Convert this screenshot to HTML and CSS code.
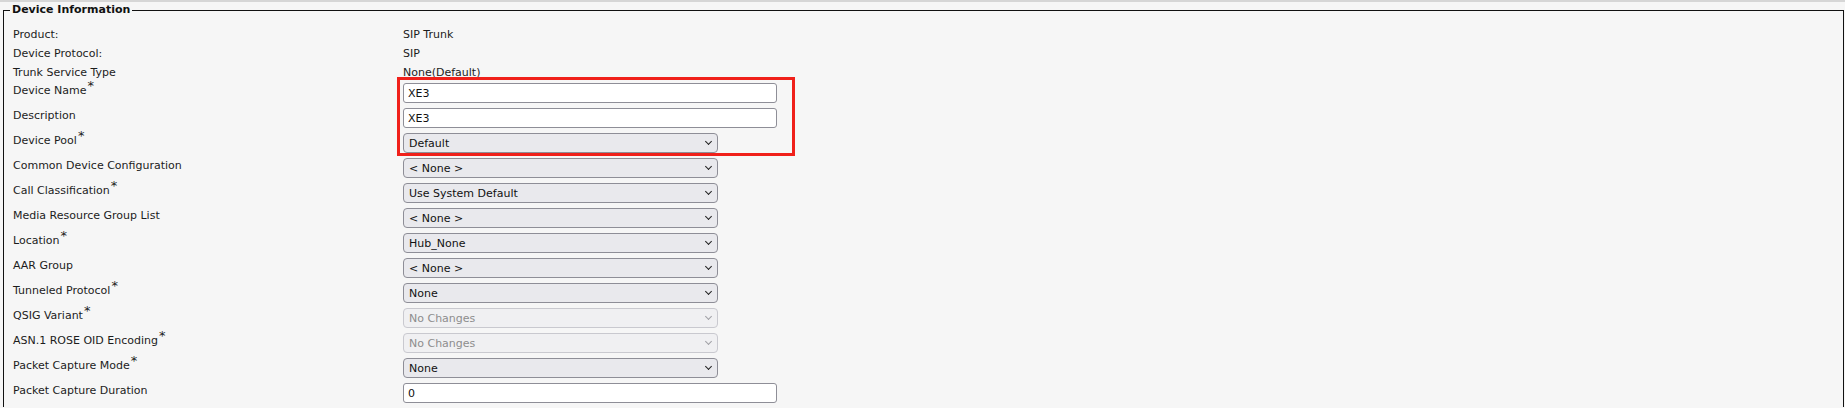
FILE: index.html
```html
<!DOCTYPE html>
<html>
<head>
<meta charset="utf-8">
<title>Device Information</title>
<link rel="stylesheet" href="styles.css">
</head>
<body>
<div class="topline"></div>
<fieldset class="box">
  <legend class="box-title">Device Information</legend>
  <div class="form">
    <div class="lbl txt">Product:</div><div class="val txt">SIP Trunk</div>
    <div class="lbl txt">Device Protocol:</div><div class="val txt">SIP</div>
    <div class="lbl txt">Trunk Service Type</div><div class="val txt">None(Default)</div>

    <div class="lbl ctl">Device Name<span class="req">*</span></div>
    <div class="val ctl anchor"><input class="field" type="text" value="XE3"><div class="highlight"></div></div>
    <div class="lbl ctl">Description</div>
    <div class="val ctl"><input class="field" type="text" value="XE3"></div>
    <div class="lbl ctl">Device Pool<span class="req">*</span></div>
    <div class="val ctl"><span class="sel"><select><option>Default</option></select></span></div>

    <div class="lbl ctl">Common Device Configuration</div>
    <div class="val ctl"><span class="sel"><select><option>&lt; None &gt;</option></select></span></div>
    <div class="lbl ctl">Call Classification<span class="req">*</span></div>
    <div class="val ctl"><span class="sel"><select><option>Use System Default</option></select></span></div>
    <div class="lbl ctl">Media Resource Group List</div>
    <div class="val ctl"><span class="sel"><select><option>&lt; None &gt;</option></select></span></div>
    <div class="lbl ctl">Location<span class="req">*</span></div>
    <div class="val ctl"><span class="sel"><select><option>Hub_None</option></select></span></div>
    <div class="lbl ctl">AAR Group</div>
    <div class="val ctl"><span class="sel"><select><option>&lt; None &gt;</option></select></span></div>
    <div class="lbl ctl">Tunneled Protocol<span class="req">*</span></div>
    <div class="val ctl"><span class="sel"><select><option>None</option></select></span></div>
    <div class="lbl ctl">QSIG Variant<span class="req">*</span></div>
    <div class="val ctl"><span class="sel disabled"><select disabled><option>No Changes</option></select></span></div>
    <div class="lbl ctl">ASN.1 ROSE OID Encoding<span class="req">*</span></div>
    <div class="val ctl"><span class="sel disabled"><select disabled><option>No Changes</option></select></span></div>
    <div class="lbl ctl">Packet Capture Mode<span class="req">*</span></div>
    <div class="val ctl"><span class="sel"><select><option>None</option></select></span></div>
    <div class="lbl ctl">Packet Capture Duration</div>
    <div class="val ctl"><input class="field" type="text" value="0"></div>
  </div>
</fieldset>
</body>
</html>
```

FILE: styles.css
```css
html, body {
  margin: 0;
  padding: 0;
  background: #f6f6f6;
  overflow: hidden;
}
body {
  font-family: "DejaVu Sans", Verdana, sans-serif;
  font-size: 11px;
  color: #1c1c1c;
}
.topline {
  height: 2px;
  background: #d6d6d6;
}
.box {
  margin: 0 1px 0 3px;
  padding: 7px 9px 0 9px;
  border: 1px solid #111;
  border-bottom: none;
  min-width: 0;
}
.box-title {
  margin-left: -3px;
  padding: 0 2px;
  font-weight: bold;
  font-size: 11px;
  line-height: 16px;
  color: #111;
}
.form {
  display: grid;
  grid-template-columns: 390px 1fr;
}
.txt {
  height: 19px;
  line-height: 19px;
}
.ctl {
  height: 25px;
}
.lbl.ctl {
  line-height: 18px;
}
.val.ctl {
  padding-top: 1px;
  box-sizing: border-box;
}
.anchor {
  position: relative;
}
.req {
  font-size: 13px;
  line-height: 0;
  vertical-align: 4px;
  margin-left: 1px;
}
.field {
  display: block;
  box-sizing: border-box;
  width: 374px;
  height: 20px;
  margin: 0;
  padding: 0 4px;
  border: 1px solid #8e8e97;
  border-radius: 3px;
  background: #fff;
  font-family: "DejaVu Sans", Verdana, sans-serif;
  font-size: 11px;
  color: #111;
  outline: none;
}
.sel {
  position: relative;
  display: block;
  width: 315px;
  height: 20px;
}
.sel select {
  -webkit-appearance: none;
  appearance: none;
  display: block;
  box-sizing: border-box;
  width: 315px;
  height: 20px;
  margin: 0;
  padding: 0 20px 0 5px;
  border: 1px solid #8e8e97;
  border-radius: 4px;
  background: #e9e9ed;
  font-family: "DejaVu Sans", Verdana, sans-serif;
  font-size: 11px;
  color: #111;
  opacity: 1;
}
.sel::after {
  content: "";
  position: absolute;
  right: 7px;
  top: 6px;
  width: 4px;
  height: 4px;
  border-right: 1.6px solid #222;
  border-bottom: 1.6px solid #222;
  transform: rotate(45deg);
  pointer-events: none;
}
.sel.disabled select {
  border-color: #c9c9cf;
  background: #f0f0f2;
  color: #8d8d8d;
}
.sel.disabled::after {
  border-color: #a0a0a6;
  border-right-width: 1.2px;
  border-bottom-width: 1.2px;
}
.highlight {
  position: absolute;
  left: -6px;
  top: -5px;
  width: 398px;
  height: 79px;
  box-sizing: border-box;
  border: 3px solid #f0201a;
  pointer-events: none;
}
```
